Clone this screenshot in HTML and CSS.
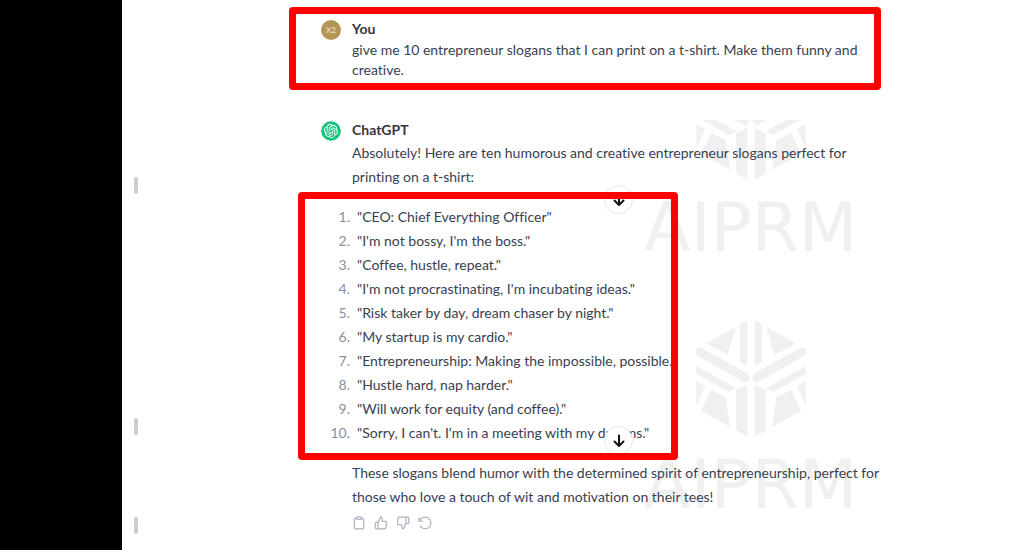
FILE: index.html
```html
<!DOCTYPE html>
<html lang="en">
<head>
<meta charset="utf-8">
<meta name="viewport" content="width=device-width, initial-scale=1">
<title>ChatGPT</title>
<link rel="stylesheet" href="styles.css">
</head>
<body class="page">
<svg class="defs" aria-hidden="true">
  <defs>
    <g id="half">
      <path d="M76 100 163 52 140 135Z M177 42 199 30V168L177 156Z M46 118 56 111 204 192V211L193 218 46 136Z M46 168 166 235 144 247 46 191Z M46 213 72 227 46 287Z M90 239 134 262 147 351 60 303Z M166 240 199 225V380L166 362Z"/>
    </g>
    <g id="cube"><use href="#half"/><use href="#half" transform="translate(420 0) scale(-1 1)"/></g>
    <g id="down"><path d="M8 2.5V13M3.5 8.5 8 13l4.500-4.500" fill="none" stroke="currentColor" stroke-width="2" stroke-linecap="round" stroke-linejoin="round"/></g>
  </defs>
</svg>

<aside class="sidebar"></aside>
<div class="gutter">
  <span class="handle"></span>
  <span class="handle handle-middle"></span>
  <span class="handle handle-last"></span>
</div>

<div class="watermark watermark-top" aria-hidden="true">
  <svg class="cube" viewBox="45 201 330 180"><use href="#cube"/></svg>
  <span class="brand">AIPRM</span>
</div>
<div class="watermark watermark-bottom" aria-hidden="true">
  <svg class="cube" viewBox="45 27 330 354"><use href="#cube"/></svg>
  <span class="brand">AIPRM</span>
</div>

<main class="chat">
  <section class="message prompt">
    <span class="avatar avatar-user">X2</span>
    <div class="body">
      <h2 class="name">You</h2>
      <p class="question">give me 10 entrepreneur slogans that I can print on a t-shirt. Make them funny and creative.</p>
    </div>
  </section>

  <section class="reply">
    <div class="message intro">
      <svg class="avatar" viewBox="0 0 40 40" aria-hidden="true">
        <circle cx="20" cy="20" r="20" fill="#19c37d"/>
        <g transform="translate(6 6) scale(1.160)" fill="#fff"><path d="M22.282 9.821a5.985 5.985 0 0 0-.516-4.911 6.046 6.046 0 0 0-6.51-2.9A6.065 6.065 0 0 0 4.981 4.182a5.985 5.985 0 0 0-3.998 2.9 6.046 6.046 0 0 0 .743 7.097 5.98 5.98 0 0 0 .511 4.911 6.051 6.051 0 0 0 6.515 2.9A5.985 5.985 0 0 0 13.26 24a6.056 6.056 0 0 0 5.772-4.206 5.99 5.99 0 0 0 3.998-2.9 6.056 6.056 0 0 0-.748-7.073zM13.26 22.43a4.476 4.476 0 0 1-2.876-1.041l.142-.08 4.778-2.758a.795.795 0 0 0 .393-.682v-6.737l2.02 1.169a.071.071 0 0 1 .038.052v5.583a4.504 4.504 0 0 1-4.495 4.494zM3.6 18.304a4.471 4.471 0 0 1-.535-3.014l.142.085 4.783 2.759a.771.771 0 0 0 .781 0l5.843-3.369v2.332a.08.08 0 0 1-.033.062L9.74 19.95a4.499 4.499 0 0 1-6.14-1.646zM2.341 7.896a4.485 4.485 0 0 1 2.365-1.973V11.6a.766.766 0 0 0 .388.677l5.815 3.355-2.02 1.168a.076.076 0 0 1-.072 0l-4.83-2.786A4.504 4.504 0 0 1 2.341 7.872zm16.597 3.855l-5.834-3.387L15.12 7.2a.076.076 0 0 1 .071 0l4.83 2.791a4.494 4.494 0 0 1-.676 8.105v-5.678a.79.79 0 0 0-.407-.667zm2.01-3.023l-.142-.085-4.773-2.782a.776.776 0 0 0-.786 0L9.409 9.23V6.897a.066.066 0 0 1 .028-.061l4.831-2.787a4.499 4.499 0 0 1 6.68 4.66zM8.307 12.863l-2.02-1.164a.08.08 0 0 1-.038-.057V6.075a4.499 4.499 0 0 1 7.375-3.453l-.142.08L8.704 5.46a.795.795 0 0 0-.393.681zm1.097-2.365l2.602-1.5 2.607 1.5v3l-2.597 1.499-2.607-1.5z"/></g>
      </svg>
      <div class="body">
        <h2 class="name">ChatGPT</h2>
        <p class="answer">Absolutely! Here are ten humorous and creative entrepreneur slogans perfect for printing on a t-shirt:</p>
      </div>
    </div>

    <div class="slogan-box">
      <ol class="slogans">
        <li><span class="num">1.</span>"CEO: Chief Everything Officer"</li>
        <li><span class="num">2.</span>"I'm not bossy, I'm the boss."</li>
        <li><span class="num">3.</span>"Coffee, hustle, repeat."</li>
        <li><span class="num">4.</span>"I'm not procrastinating, I'm incubating ideas."</li>
        <li><span class="num">5.</span>"Risk taker by day, dream chaser by night."</li>
        <li><span class="num">6.</span>"My startup is my cardio."</li>
        <li><span class="num">7.</span>"Entrepreneurship: Making the impossible, possible."</li>
        <li><span class="num">8.</span>"Hustle hard, nap harder."</li>
        <li><span class="num">9.</span>"Will work for equity (and coffee)."</li>
        <li><span class="num">10.</span>"Sorry, I can't. I'm in a meeting with my dreams."</li>
      </ol>
      <button class="scroll scroll-top" type="button" aria-label="Scroll down"><svg viewBox="0 0 16 16"><use href="#down"/></svg></button>
      <button class="scroll scroll-bottom" type="button" aria-label="Scroll to bottom"><svg viewBox="0 0 16 16"><use href="#down"/></svg></button>
    </div>

    <div class="closing">
      <p class="answer outro">These slogans blend humor with the determined spirit of entrepreneurship, perfect for those who love a touch of wit and motivation on their tees!</p>
      <div class="actions">
        <button type="button" aria-label="Copy"><svg viewBox="0 0 24 24"><path d="M8 4H6a2 2 0 0 0-2 2v14a2 2 0 0 0 2 2h12a2 2 0 0 0 2-2V6a2 2 0 0 0-2-2h-2"/><rect x="8" y="2" width="8" height="4" rx="1"/></svg></button>
        <button type="button" aria-label="Good response"><svg viewBox="0 0 24 24"><path d="M14 9V5a3 3 0 0 0-3-3l-4 9v11h11.280a2 2 0 0 0 2-1.700l1.380-9a2 2 0 0 0-2-2.300zM7 22H4a2 2 0 0 1-2-2v-7a2 2 0 0 1 2-2h3"/></svg></button>
        <button type="button" aria-label="Bad response"><svg viewBox="0 0 24 24"><path d="M10 15v4a3 3 0 0 0 3 3l4-9V2H5.720a2 2 0 0 0-2 1.700l-1.380 9a2 2 0 0 0 2 2.300zM17 2h2.670A2.310 2.310 0 0 1 22 4v7a2.310 2.310 0 0 1-2.330 2H17"/></svg></button>
        <button type="button" aria-label="Regenerate"><svg viewBox="0 0 24 24"><path d="M2 3v6h6M2.500 9A10 10 0 1 1 3.500 17"/></svg></button>
      </div>
    </div>
  </section>
</main>
</body>
</html>
```

FILE: styles.css
```css
* {
  box-sizing: border-box;
}

.page {
  position: relative;
  z-index: 0;
  display: flex;
  min-height: 100vh;
  margin: 0;
  background: #fff;
  color: #374151;
  font: 14px/24px Lato, "Liberation Sans", sans-serif;
  font-variant-ligatures: none;
}

.defs {
  position: absolute;
  width: 0;
  height: 0;
}

.sidebar {
  flex: 0 0 122px;
  background: #000;
}

.gutter {
  display: flex;
  flex: 0 0 167px;
  flex-direction: column;
  padding: 177px 12px 0;
}

.handle {
  width: 4px;
  height: 17px;
  border-radius: 2px;
  background: #cdcdcd;
}

.handle-middle {
  margin-top: 224px;
}

.handle-last {
  margin-top: 82px;
}

.chat {
  flex: 0 1 592px;
  min-width: 0;
  padding-top: 7px;
}

.message {
  display: flex;
  gap: 11px;
}

.prompt {
  padding: 4px 8px 3px 25px;
  border: 7px solid #f00;
  border-radius: 4px;
}

.avatar {
  flex: 0 0 20px;
  width: 20px;
  height: 20px;
  margin-top: 2px;
  border-radius: 50%;
}

.avatar-user {
  background: #b59556;
  color: #eee3cc;
  font-size: 8px;
  line-height: 20px;
  text-align: center;
}

.name {
  margin: 0;
  color: #343541;
  font-size: 14px;
  font-weight: 700;
  line-height: 22px;
}

.question,
.answer {
  margin: 0;
}

.question {
  line-height: 20px;
}

.intro {
  margin-top: 29px;
  padding: 0 20px 0 32px;
}

.slogan-box {
  position: relative;
  width: 380px;
  max-width: 100%;
  margin: 3px 0 0 9px;
  padding: 13px 7px 15px;
}

.slogan-box::after {
  position: absolute;
  z-index: 2;
  inset: 0;
  border: 7px solid #f00;
  border-radius: 4px;
  content: "";
  pointer-events: none;
}

.slogans {
  margin: 0;
  padding: 0;
  list-style: none;
}

.slogans li {
  display: flex;
  gap: 7px;
  white-space: nowrap;
}

.num {
  flex: 0 0 45px;
  color: #8e8ea0;
  text-align: right;
}

.scroll {
  position: absolute;
  z-index: 1;
  right: 45px;
  display: grid;
  width: 29px;
  height: 29px;
  padding: 0;
  place-items: center;
  border: 1px solid #e5e5e5;
  border-radius: 50%;
  background: #fff;
  color: #111;
}

.scroll svg {
  width: 16px;
  height: 16px;
}

.scroll-top {
  top: -7px;
}

.scroll-bottom {
  bottom: 5px;
}

.closing {
  padding: 1px 0 0 63px;
}

.outro {
  clip-path: inset(7px 0 0);
}

.actions {
  display: flex;
  gap: 8px;
  margin-top: 7px;
}

.actions button {
  display: grid;
  width: 14px;
  height: 14px;
  padding: 0;
  border: 0;
  background: none;
}

.actions svg {
  width: 14px;
  height: 14px;
  fill: none;
  stroke: #acacbe;
  stroke-width: 2;
  stroke-linecap: round;
  stroke-linejoin: round;
}

.watermark {
  position: absolute;
  z-index: -1;
  left: 644px;
  display: flex;
  flex-direction: column;
  gap: 14px;
  align-items: center;
  color: #f0f0f0;
}

.watermark-top {
  top: 120px;
}

.watermark-bottom {
  top: 319px;
}

.cube {
  width: 110px;
  fill: currentColor;
}

.brand {
  font: 68px/67px "DejaVu Sans", sans-serif;
}
```
